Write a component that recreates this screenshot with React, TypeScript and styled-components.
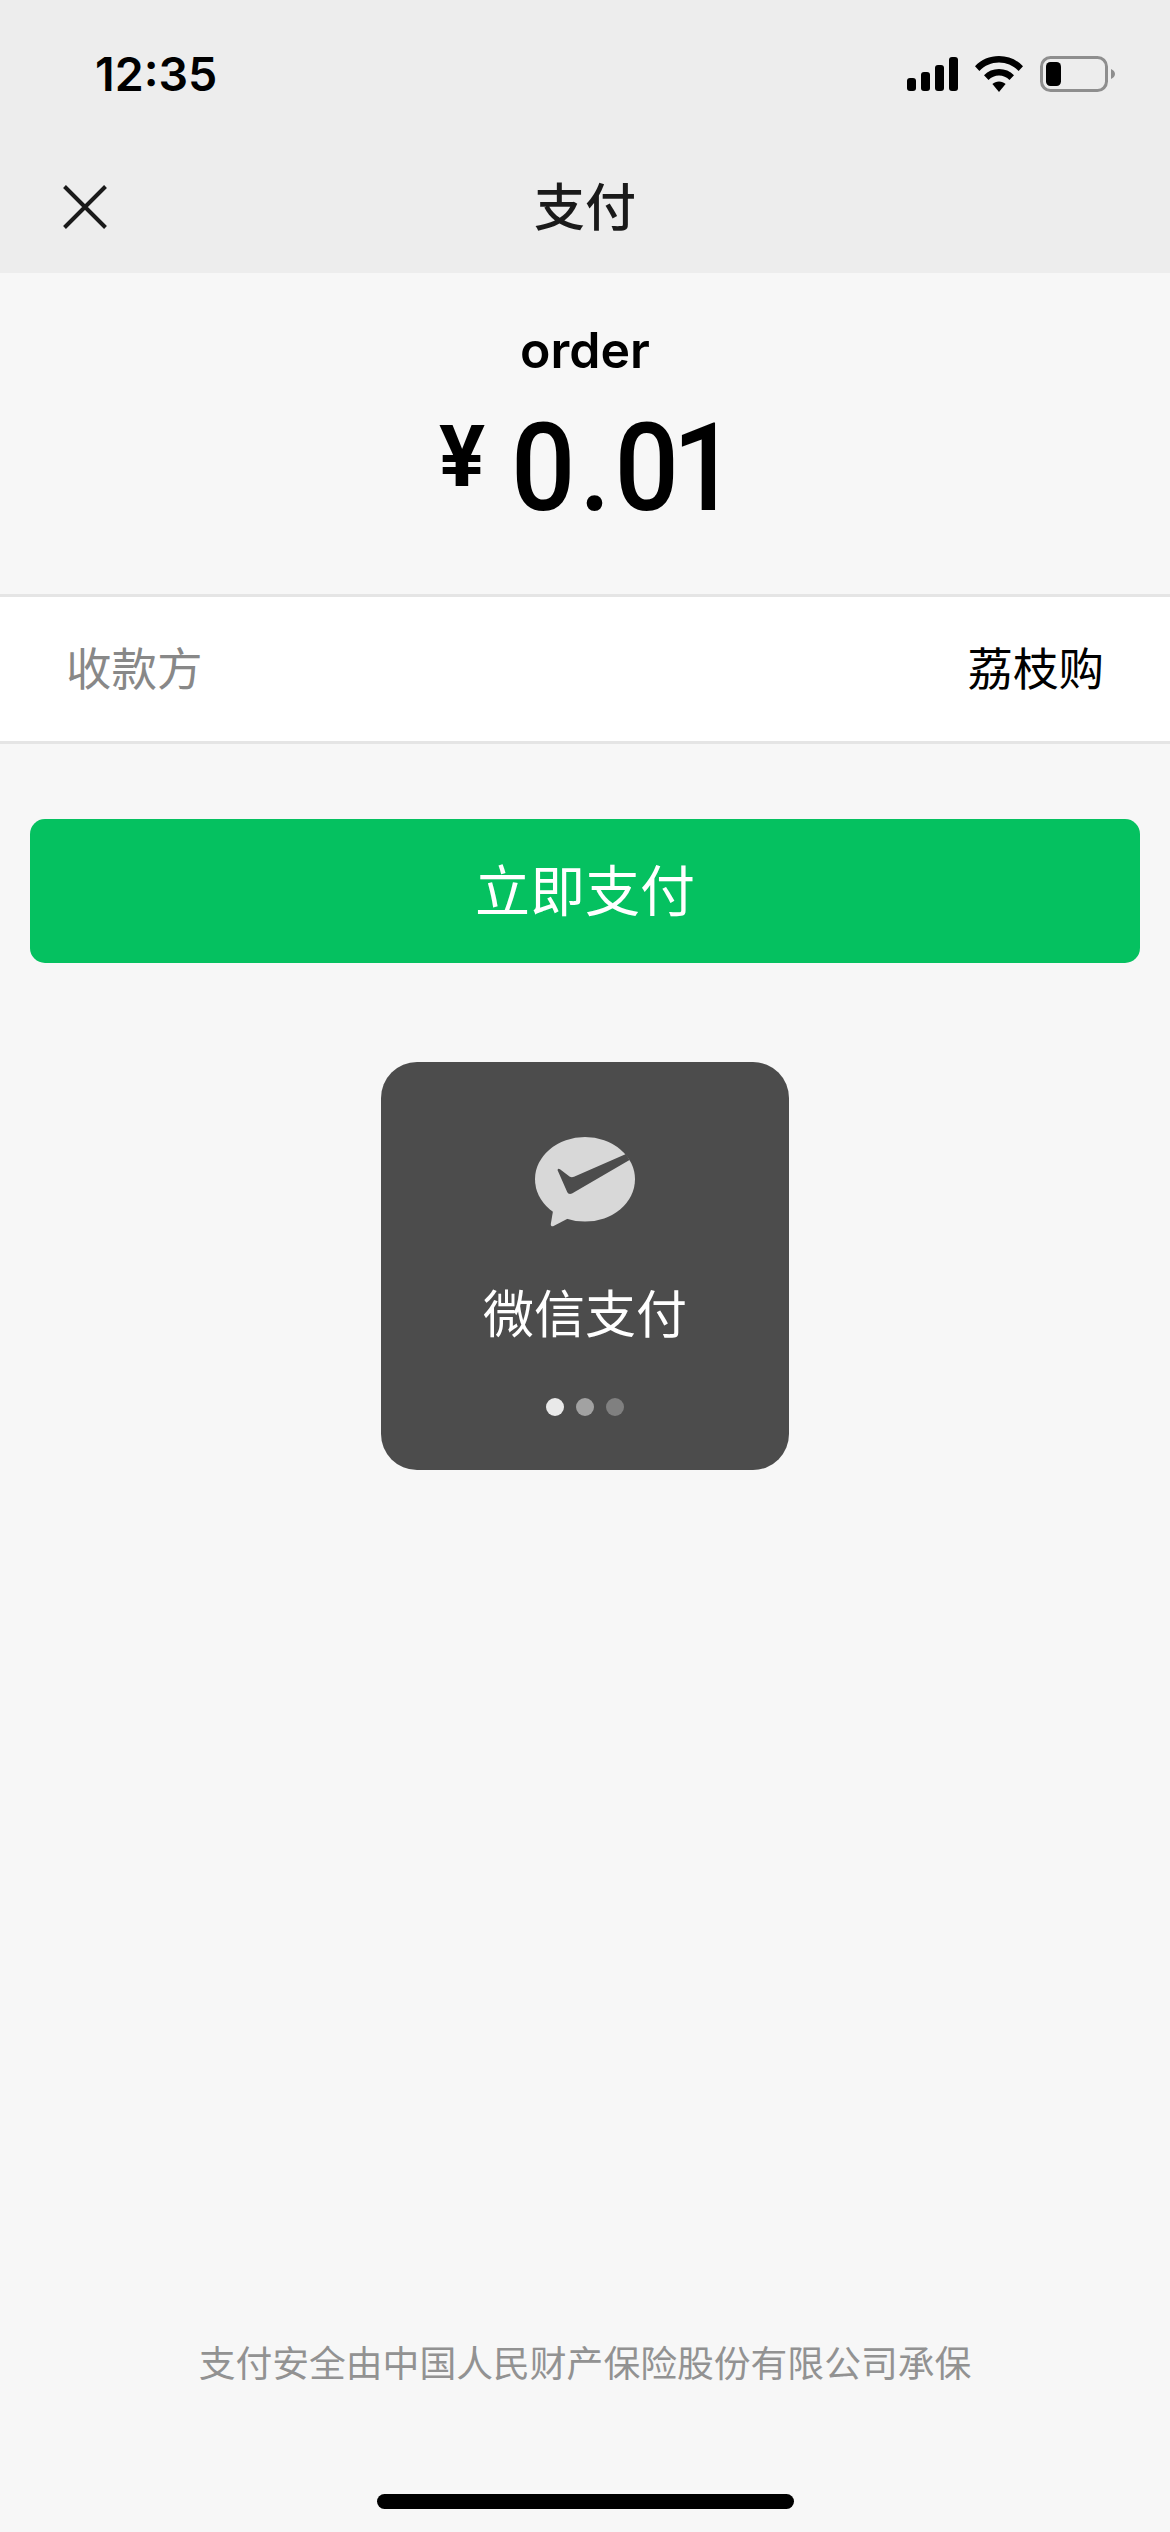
import React from "react";
import styled, { createGlobalStyle } from "styled-components";

const GlobalStyle = createGlobalStyle`
  html, body {
    margin: 0;
    padding: 0;
    background: #f7f7f7;
  }
`;

const CJK = `"Noto Sans CJK SC", "Noto Sans", sans-serif`;

function SignalIcon() {
  return (
    <svg width="51" height="34" viewBox="0 0 51 34" fill="#000">
      <rect x="0" y="21" width="9" height="13" rx="3" />
      <rect x="14" y="15" width="9" height="19" rx="3" />
      <rect x="28" y="8" width="9" height="26" rx="3" />
      <rect x="42" y="0" width="9" height="34" rx="3" />
    </svg>
  );
}

function WifiIcon() {
  return (
    <svg width="48" height="36" viewBox="0 0 48 36" fill="#000">
      <path d="M24 0C33.5 0 41.5 3.6 48 10.2L43.6 15C38.2 9.6 31.6 6.6 24 6.6S9.8 9.6 4.4 15L0 10.2C6.5 3.6 14.5 0 24 0Z" />
      <path d="M24 13C30 13 35 15.2 39 19.2L34.5 24C31.6 21.2 28 19.6 24 19.6S16.4 21.2 13.5 24L9 19.2C13 15.2 18 13 24 13Z" />
      <path d="M24 25.5C26.6 25.5 28.8 26.4 30.6 28L24 36L17.4 28C19.2 26.4 21.4 25.5 24 25.5Z" />
    </svg>
  );
}

function BatteryIcon() {
  return (
    <svg width="75" height="36" viewBox="0 0 75 36">
      <rect x="1.5" y="1.5" width="65" height="33" rx="9" fill="none" stroke="#8e8e8e" strokeWidth="3" />
      <rect x="6" y="6" width="15" height="24" rx="4.5" fill="#000" />
      <path d="M71 13C73.4 14 75 15.8 75 18S73.4 22 71 23Z" fill="#8e8e8e" />
    </svg>
  );
}

function CloseIcon() {
  return (
    <svg width="44" height="44" viewBox="0 0 44 44" stroke="#1a1a1a" strokeWidth="4" fill="none">
      <path d="M1.5 1.5L42.5 42.5M42.5 1.5L1.5 42.5" />
    </svg>
  );
}

function WechatPayIcon() {
  return (
    <svg width="100" height="90" viewBox="0 0 100 90">
      <ellipse cx="50" cy="42.3" rx="50" ry="42.3" fill="#d8d8d8" />
      <path d="M18 74L15.8 87C15.6 89 17 89.8 18.6 89L33 81.5Z" fill="#d8d8d8" />
      <path d="M22.5 33C23 31.5 24 31.5 25 32.3L34.5 39.5C36 40.5 37.5 40.5 39 39.8L91 17L94.5 23L37 56.5C35 57.5 33 57 32.2 55Z" fill="#4c4c4c" />
    </svg>
  );
}

const DOTS = ["#e9e9e9", "#a2a2a2", "#808080"];

function App() {
  return (
    <Page>
      <GlobalStyle />
      <TopBar>
        <StatusBar>
          <Clock>12:35</Clock>
          <StatusIcons>
            <SignalIcon />
            <WifiIcon />
            <BatteryIcon />
          </StatusIcons>
        </StatusBar>
        <NavBar>
          <CloseButton>
            <CloseIcon />
          </CloseButton>
          <NavTitle>支付</NavTitle>
        </NavBar>
      </TopBar>

      <Summary>
        <OrderName>order</OrderName>
        <Amount>
          <Currency>¥</Currency>
          <Price>
            0<PricePoint>.</PricePoint>01
          </Price>
        </Amount>
      </Summary>

      <InfoRow>
        <InfoLabel>收款方</InfoLabel>
        <InfoValue>荔枝购</InfoValue>
      </InfoRow>

      <PayButton>立即支付</PayButton>

      <LoadingToast>
        <WechatPayIcon />
        <ToastText>微信支付</ToastText>
        <DotRow>
          {DOTS.map((color) => (
            <Dot key={color} $color={color} />
          ))}
        </DotRow>
      </LoadingToast>

      <Footer>支付安全由中国人民财产保险股份有限公司承保</Footer>
      <HomeIndicator />
    </Page>
  );
}

const Page = styled.div`
  display: flex;
  flex-direction: column;
  width: 1170px;
  height: 2532px;
  overflow: hidden;
  background: #f7f7f7;
  font-family: ${CJK};
`;

const TopBar = styled.header`
  display: flex;
  flex-direction: column;
  height: 273px;
  background: #ededed;
`;

const StatusBar = styled.div`
  display: flex;
  align-items: center;
  justify-content: space-between;
  height: 148px;
  padding: 0 55px 0 95px;
  box-sizing: border-box;
`;

const Clock = styled.span`
  font-family: Inter, "Liberation Sans", sans-serif;
  font-size: 46.5px;
  font-weight: 600;
  color: #000;
`;

const StatusIcons = styled.div`
  display: flex;
  align-items: center;
  gap: 17px;
`;

const NavBar = styled.div`
  position: relative;
  display: flex;
  align-items: center;
  justify-content: center;
  height: 118px;
  padding-bottom: 6px;
  box-sizing: border-box;
`;

const CloseButton = styled.div`
  position: absolute;
  left: 63px;
  top: 37px;
  display: flex;
`;

const NavTitle = styled.div`
  font-size: 51px;
  font-weight: 500;
  color: #1a1a1a;
`;

const Summary = styled.section`
  display: flex;
  flex-direction: column;
  align-items: center;
  height: 321px;
`;

const OrderName = styled.div`
  margin-top: 44px;
  font-family: Inter, "Noto Sans", sans-serif;
  font-size: 50px;
  font-weight: 600;
  line-height: 66px;
  color: #000;
`;

const Amount = styled.div`
  display: flex;
  align-items: flex-start;
  gap: 26px;
  margin-top: 16px;
  color: #000;
`;

const Currency = styled.span`
  margin-top: 8px;
  font-family: Roboto, sans-serif;
  font-size: 86px;
  font-weight: 700;
  line-height: 100px;
`;

const Price = styled.span`
  margin-right: -16px;
  font-family: Roboto, sans-serif;
  font-size: 122px;
  font-weight: 500;
  line-height: 140px;
  letter-spacing: -7px;
  transform: scaleX(0.93);
  transform-origin: left center;
`;

const PricePoint = styled.span`
  margin: 0 11px;
`;

const InfoRow = styled.section`
  display: flex;
  align-items: center;
  justify-content: space-between;
  height: 150px;
  padding: 0 66px 6px;
  box-sizing: border-box;
  background: #fff;
  border-top: 3px solid #e5e5e5;
  border-bottom: 3px solid #e5e5e5;
  font-size: 45.5px;
`;

const InfoLabel = styled.span`
  color: #888;
`;

const InfoValue = styled.span`
  color: #000;
`;

const PayButton = styled.div`
  display: flex;
  align-items: center;
  justify-content: center;
  height: 144px;
  margin: 75px 30px 0;
  padding-bottom: 8px;
  box-sizing: border-box;
  border-radius: 15px;
  background: #05c160;
  color: #fff;
  font-size: 55px;
`;

const LoadingToast = styled.div`
  display: flex;
  flex-direction: column;
  align-items: center;
  width: 408px;
  height: 408px;
  margin: 99px auto 0;
  padding-top: 75px;
  box-sizing: border-box;
  border-radius: 36px;
  background: #4c4c4c;
`;

const ToastText = styled.div`
  margin-top: 48px;
  font-size: 51px;
  line-height: 72px;
  color: #fff;
`;

const DotRow = styled.div`
  display: flex;
  gap: 12px;
  margin-top: 51px;
`;

const Dot = styled.span<{ $color: string }>`
  width: 18px;
  height: 18px;
  border-radius: 50%;
  background: ${({ $color }) => $color};
`;

const Footer = styled.div`
  margin-top: auto;
  text-align: center;
  font-size: 36.8px;
  line-height: 50px;
  color: #929292;
`;

const HomeIndicator = styled.div`
  width: 417px;
  height: 15px;
  margin: 108px auto 23px;
  border-radius: 8px;
  background: #000;
`;

export default App;
